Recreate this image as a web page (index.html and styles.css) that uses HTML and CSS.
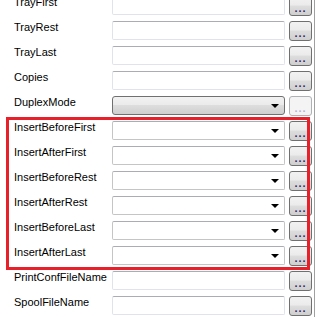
FILE: index.html
```html
<!DOCTYPE html>
<html lang="en">
<head>
  <meta charset="UTF-8"/>
  <title>Print settings</title>
  <link rel="stylesheet" href="styles.css">
</head>
<body>

  <!-- Property list -->
  <div class="props">
    <div class="row">
      <label>TrayFirst</label>
      <div class="field text"></div>
      <button class="dots">...</button>
    </div>
    <div class="row">
      <label>TrayRest</label>
      <div class="field text"></div>
      <button class="dots">...</button>
    </div>
    <div class="row">
      <label>TrayLast</label>
      <div class="field text"></div>
      <button class="dots">...</button>
    </div>
    <div class="row">
      <label>Copies</label>
      <div class="field text"></div>
      <button class="dots">...</button>
    </div>
    <div class="row">
      <label>DuplexMode</label>
      <div class="field list"><span class="arrow"></span></div>
      <button class="dots" disabled>...</button>
    </div>
    <div class="row">
      <label>InsertBeforeFirst</label>
      <div class="field combo"><span class="arrow"></span></div>
      <button class="dots">...</button>
    </div>
    <div class="row">
      <label>InsertAfterFirst</label>
      <div class="field combo"><span class="arrow"></span></div>
      <button class="dots">...</button>
    </div>
    <div class="row">
      <label>InsertBeforeRest</label>
      <div class="field combo"><span class="arrow"></span></div>
      <button class="dots">...</button>
    </div>
    <div class="row">
      <label>InsertAfterRest</label>
      <div class="field combo"><span class="arrow"></span></div>
      <button class="dots">...</button>
    </div>
    <div class="row">
      <label>InsertBeforeLast</label>
      <div class="field combo"><span class="arrow"></span></div>
      <button class="dots">...</button>
    </div>
    <div class="row">
      <label>InsertAfterLast</label>
      <div class="field combo"><span class="arrow"></span></div>
      <button class="dots">...</button>
    </div>
    <div class="row">
      <label>PrintConfFileName</label>
      <div class="field text"></div>
      <button class="dots">...</button>
    </div>
    <div class="row">
      <label>SpoolFileName</label>
      <div class="field text"></div>
      <button class="dots">...</button>
    </div>

    <!-- highlight -->
    <div class="mark"></div>
  </div>

</body>
</html>
```

FILE: styles.css
```css
html {
  overflow: hidden;
}

body {
  margin: -4px 0 0 0;
  background: #ffffff;
  font-family: "Liberation Sans", Arial, sans-serif;
  font-size: 11px;
  color: #000000;
}

.props {
  position: relative;
  height: 321px;
  border-right: 1px solid #a0a0a0;
  width: 314px;
}

.row {
  display: flex;
  align-items: flex-start;
  height: 25px;
}

.row label {
  width: 98px;
  padding-left: 14px;
  padding-top: 0;
  line-height: 13px;
}

.field {
  position: relative;
  box-sizing: border-box;
  width: 173px;
  height: 19px;
  border: 1px solid #e2e3ea;
  border-top-color: #abadb3;
  border-radius: 2px;
  background: #ffffff;
}

.field.combo {
  border-color: #c5c5c5;
  border-top-color: #abadb3;
}

.field.list {
  border: 1px solid #707070;
  border-radius: 3px;
  background: linear-gradient(#f2f2f2 0%, #ebebeb 45%, #dddddd 50%, #cfcfcf 100%);
}

.arrow {
  position: absolute;
  right: 5px;
  top: 7px;
  width: 0;
  height: 0;
  border-left: 4px solid transparent;
  border-right: 4px solid transparent;
  border-top: 4px solid #000000;
}

.dots {
  box-sizing: border-box;
  width: 23px;
  height: 20px;
  margin-left: 4px;
  padding: 0 0 1px 0;
  border: 1px solid #707070;
  border-radius: 3px;
  background: linear-gradient(#f2f2f2 0%, #ebebeb 45%, #dddddd 50%, #cfcfcf 100%);
  font-family: "Liberation Sans", Arial, sans-serif;
  font-size: 11px;
  font-weight: bold;
  letter-spacing: 1px;
  line-height: 12px;
  color: #302a6a;
  display: flex;
  align-items: flex-end;
  justify-content: center;
}

.dots:disabled {
  border-color: #adb2b5;
  background: #f4f4f4;
  color: #b8b4d0;
}

.mark {
  position: absolute;
  left: 6px;
  top: 121px;
  width: 298px;
  height: 147px;
  border: 3px solid #e8202a;
}
```
